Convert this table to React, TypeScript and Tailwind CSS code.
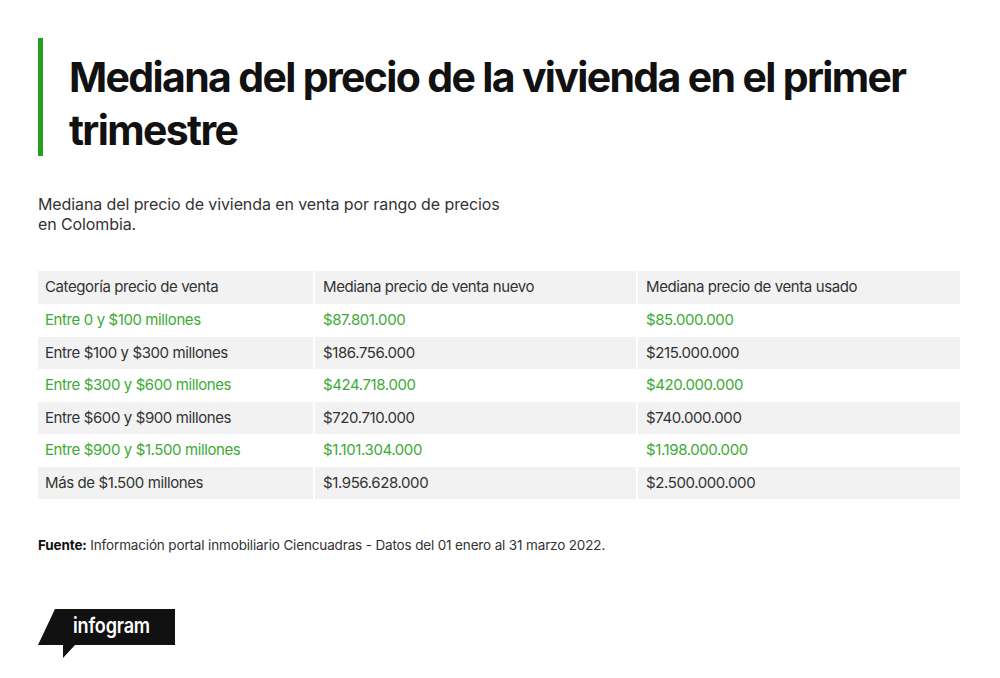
const rows = [
  { cat: "Entre 0 y $100 millones", nuevo: "$87.801.000", usado: "$85.000.000" },
  { cat: "Entre $100 y $300 millones", nuevo: "$186.756.000", usado: "$215.000.000" },
  { cat: "Entre $300 y $600 millones", nuevo: "$424.718.000", usado: "$420.000.000" },
  { cat: "Entre $600 y $900 millones", nuevo: "$720.710.000", usado: "$740.000.000" },
  { cat: "Entre $900 y $1.500 millones", nuevo: "$1.101.304.000", usado: "$1.198.000.000" },
  { cat: "Más de $1.500 millones", nuevo: "$1.956.628.000", usado: "$2.500.000.000" },
];

const InfogramLogo = () => (
  <div className="relative w-[140px] h-[50px]">
    <svg width="140" height="50" viewBox="0 0 140 50" className="absolute inset-0">
      <polygon points="17,0 137,0 137,36 37,36 25,49 25,36 0,36" fill="#111111" />
    </svg>
    <span className="absolute left-[35px] top-[4px] inline-block origin-left scale-x-[0.86] text-[21px] leading-[26px] font-semibold text-white tracking-[-0.2px] font-['Inter',sans-serif]">
      infogram
    </span>
  </div>
);

export default function App() {
  return (
    <div className="w-[1000px] h-[678px] bg-white font-['Inter',sans-serif] text-[#333] overflow-hidden">
      <div className="pl-[38px] pt-[38px]">
        {/* Title */}
        <div className="flex">
          <div className="w-[5px] h-[118px] bg-[#2a9d1f]" />
          <h1 className="ml-[26px] mt-[13px] text-[41px] leading-[53px] font-bold tracking-[-1.65px] text-[#111]">
            Mediana del precio de la vivienda en el primer
            <br />
            trimestre
          </h1>
        </div>

        <p className="mt-[37px] text-[16px] leading-[20px] tracking-[-0.1px] text-[#333]">
          Mediana del precio de vivienda en venta por rango de precios
          <br />
          en Colombia.
        </p>

        {/* Table */}
        <div className="mt-[37px] w-[922px] text-[15px] tracking-[-0.4px]">
          <div className="grid grid-cols-[277px_323px_322px] h-[33px] bg-[#f2f2f2]">
            <div className="flex items-center pl-[7px] border-r-2 border-white">Categoría precio de venta</div>
            <div className="flex items-center pl-[8px] border-r-2 border-white">Mediana precio de venta nuevo</div>
            <div className="flex items-center pl-[8px]">Mediana precio de venta usado</div>
          </div>
          {rows.map((r, i) => {
            const green = i % 2 === 0;
            return (
              <div
                key={r.cat}
                className={
                  green
                    ? "grid grid-cols-[277px_323px_322px] h-[32.5px] bg-white text-[#3daa34]"
                    : "grid grid-cols-[277px_323px_322px] h-[32.5px] bg-[#f2f2f2] text-[#333]"
                }
              >
                <div className="flex items-center pl-[7px] border-r-2 border-white">{r.cat}</div>
                <div className="flex items-center pl-[8px] border-r-2 border-white">{r.nuevo}</div>
                <div className="flex items-center pl-[8px]">{r.usado}</div>
              </div>
            );
          })}
        </div>

        <p className="mt-[36px] text-[13.5px] tracking-[-0.15px] text-[#333]">
          <span className="font-bold text-[#111]">Fuente:</span> Información portal inmobiliario Ciencuadras - Datos del 01 enero al 31 marzo 2022.
        </p>

        <div className="mt-[54px]">
          <InfogramLogo />
        </div>
      </div>
    </div>
  );
}
